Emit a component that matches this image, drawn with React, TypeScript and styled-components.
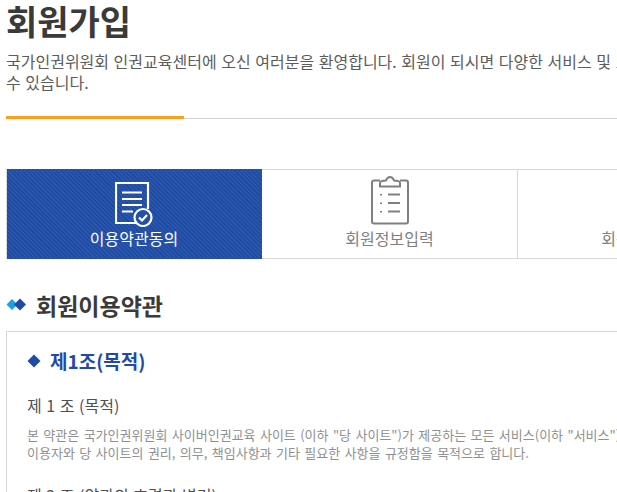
import React from 'react';
import styled, {createGlobalStyle} from 'styled-components';

const GlobalStyle = createGlobalStyle`
  html, body {
    margin: 0;
    padding: 0;
    background: #fff;
    overflow: hidden;
  }
  body {
    font-family: "Noto Sans CJK KR", "Liberation Sans", sans-serif;
  }
`

const Page = styled.div`
  width: 1040px;
  height: 492px;
  overflow: hidden;
  padding-left: 6px;
  box-sizing: border-box;
`

const Title = styled.h1`
  margin: 0;
  height: 46px;
  font-size: 34px;
  line-height: 42px;
  font-weight: 700;
  color: #3a3a3a;
`

const Intro = styled.p`
  margin: 0;
  padding-top: 5px;
  font-size: 16px;
  line-height: 21px;
  word-spacing: 1px;
  color: #5c5c5c;
  white-space: nowrap;
`

const Rule = styled.div`
  margin: 25px 0 50px;
  height: 0;
  border-bottom: 1px solid #d2d2d2;
  position: relative;

  &::before {
    content: '';
    position: absolute;
    left: 0;
    top: -2px;
    width: 178px;
    height: 3px;
    background: #faa01e;
  }
`

const Steps = styled.ol`
  display: grid;
  grid-template-columns: 255px 256px 256px 256px;
  margin: 0;
  padding: 0;
  list-style: none;
  height: 90px;
  border-left: 1px solid #d8d8d8;
`

const Step = styled.li<{$active?: boolean}>`
  display: flex;
  flex-direction: column;
  align-items: center;
  justify-content: flex-end;
  box-sizing: border-box;
  padding-bottom: 9px;
  font-size: 16px;
  line-height: 22px;
  color: ${({$active}) => ($active ? '#fff' : '#808080')};
  border: 1px solid ${({$active}) => ($active ? 'transparent' : '#d8d8d8')};
  border-left: 0;
  background: ${({$active}) =>
    $active
      ? 'repeating-linear-gradient(45deg, #1f4ba3 0 1.500px, #2a56ae 1.500px 3px)'
      : '#fff'};
`

const SectionTitle = styled.h2`
  display: flex;
  align-items: center;
  gap: 10px;
  margin: 31px 0 0;
  height: 30px;
  font-size: 23px;
  line-height: 30px;
  font-weight: 700;
  color: #3a3a3a;
`

const TermsBox = styled.section`
  margin-top: 11px;
  border: 1px solid #d8d8d8;
  padding: 14px 20px 0;
  height: 200px;
`

const ArticleTitle = styled.h3`
  display: flex;
  align-items: center;
  gap: 9px;
  margin: 0;
  height: 30px;
  font-size: 19px;
  line-height: 30px;
  font-weight: 700;
  color: #1f4ba3;
`

const ClauseTitle = styled.h4`
  margin: 18px 0 0;
  font-size: 16px;
  line-height: 22px;
  font-weight: 400;
  word-spacing: 1px;
  color: #505050;
`

const ClauseText = styled.p`
  margin: 10px 0 0;
  font-size: 13px;
  line-height: 18px;
  word-spacing: 1.500px;
  color: #909090;
  white-space: nowrap;
`

const NextClause = styled(ClauseTitle)`
  margin-top: 22px;
`

const SectionMark = () => (
  <svg width="20" height="14" viewBox="0 0 20 14" aria-hidden="true">
    <path d="M6 1l5.500 5.500-5.500 5.500-5.500-5.500z" fill="#1ba0e2" />
    <path d="M14 .500l6 6-6 6-6-6z" fill="#1f4ba3" />
  </svg>
);

const ArticleMark = () => (
  <svg width="14" height="14" viewBox="0 0 14 14" aria-hidden="true">
    <path d="M7 0.500l6.500 6.500-6.500 6.500-6.500-6.500z" fill="#1f4ba3" />
  </svg>
);

const TermsIcon = () => (
  <svg width="38" height="45" viewBox="0 0 38 45" fill="none" stroke="#fff" aria-hidden="true">
    <path d="M21 41H1V1h32v26" strokeWidth="2.200" />
    <path d="M7 10.500h20M7 17h20M7 23h20M7 29.500h11" strokeWidth="2" />
    <circle cx="28" cy="35.500" r="8.500" fill="#2450a8" strokeWidth="2.200" />
    <path d="M24 35.500l3 3 5-5.500" strokeWidth="2.200" />
  </svg>
);

const ClipboardIcon = () => (
  <svg width="38" height="51" viewBox="0 0 38 51" fill="none" stroke="#808080" aria-hidden="true">
    <path
      d="M9 4.500H3a2 2 0 0 0-2 2v39a2 2 0 0 0 2 2h32a2 2 0 0 0 2-2v-39a2 2 0 0 0-2-2h-6"
      strokeWidth="2"
    />
    <path d="M9 10.500V7c0-2 2-2.500 6-2.500C16 2 17 1 19 1s3 1 4 3.500c4 0 6 .500 6 2.500v3.500z" strokeWidth="2" />
    <path d="M17 18.500h12M17 27h12M17 35.500h12" strokeWidth="2.200" />
    <path d="M10 18v1.500M10 26.500V28M10 35v1.500" strokeWidth="2" />
  </svg>
);

export default function App() {
  return (
    <Page>
      <GlobalStyle />
      <Title>회원가입</Title>
      <Intro>
        국가인권위원회 인권교육센터에 오신 여러분을 환영합니다. 회원이 되시면 다양한 서비스 및 교육을 받으실
        <br />
        수 있습니다.
      </Intro>
      <Rule />
      <Steps>
        <Step $active>
          <TermsIcon />
          이용약관동의
        </Step>
        <Step>
          <ClipboardIcon />
          회원정보입력
        </Step>
        <Step>회원가입완료</Step>
      </Steps>
      <SectionTitle>
        <SectionMark />
        회원이용약관
      </SectionTitle>
      <TermsBox>
        <ArticleTitle>
          <ArticleMark />
          제1조(목적)
        </ArticleTitle>
        <ClauseTitle>제 1 조 (목적)</ClauseTitle>
        <ClauseText>
          본 약관은 국가인권위원회 사이버인권교육 사이트 (이하 "당 사이트")가 제공하는 모든 서비스(이하 "서비스")의 이용조건 및 절차,
          <br />
          이용자와 당 사이트의 권리, 의무, 책임사항과 기타 필요한 사항을 규정함을 목적으로 합니다.
        </ClauseText>
        <NextClause>제 2 조 (약관의 효력과 변경)</NextClause>
      </TermsBox>
    </Page>
  );
}
